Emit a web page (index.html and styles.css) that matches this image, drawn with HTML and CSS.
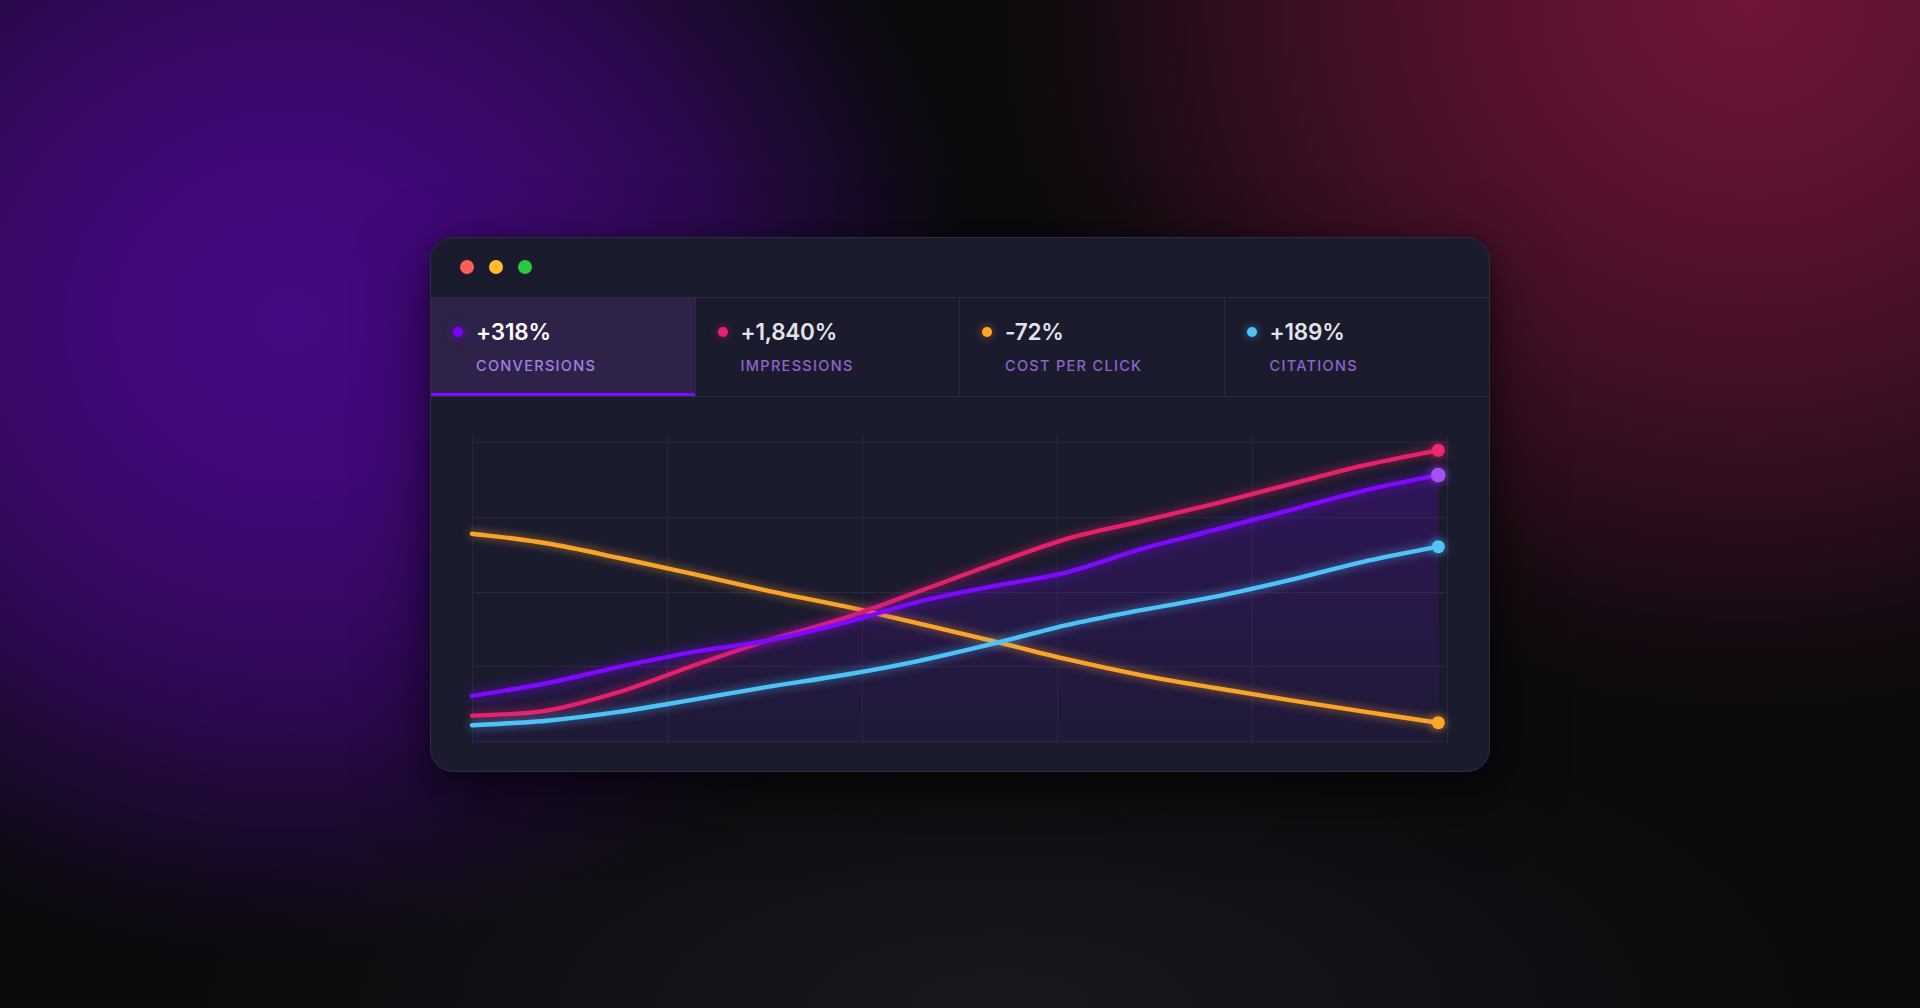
FILE: index.html
```html
<!DOCTYPE html>
<html lang="en">
<head>
<meta charset="utf-8">
<title>Metrics</title>
<link rel="stylesheet" href="styles.css">
</head>
<body>
<div class="stage">
  <div class="window">
    <div class="titlebar">
      <span class="light light-red"></span>
      <span class="light light-yellow"></span>
      <span class="light light-green"></span>
    </div>
    <div class="tabs">
      <div class="tab tab-active">
        <div class="tab-head"><span class="dot dot-purple"></span><span class="value">+318%</span></div>
        <div class="label">Conversions</div>
      </div>
      <div class="tab">
        <div class="tab-head"><span class="dot dot-pink"></span><span class="value">+1,840%</span></div>
        <div class="label">Impressions</div>
      </div>
      <div class="tab">
        <div class="tab-head"><span class="dot dot-orange"></span><span class="value">-72%</span></div>
        <div class="label">Cost per click</div>
      </div>
      <div class="tab">
        <div class="tab-head"><span class="dot dot-cyan"></span><span class="value">+189%</span></div>
        <div class="label">Citations</div>
      </div>
    </div>
    <div class="chart">
      <svg class="chart-svg" width="1000" height="320" viewBox="0 0 1000 320">
        <defs>
          <linearGradient id="fillPurple" x1="0" y1="0" x2="0" y2="1">
            <stop offset="0" stop-color="#7f00ff" stop-opacity="0.2"/>
            <stop offset="1" stop-color="#7f00ff" stop-opacity="0.04"/>
          </linearGradient>
        </defs>
        <g class="grid">
          <line x1="10.5" y1="5" x2="10.5" y2="313.5"/>
          <line x1="205.5" y1="5" x2="205.5" y2="313.5"/>
          <line x1="400.5" y1="5" x2="400.5" y2="313.5"/>
          <line x1="595.5" y1="5" x2="595.5" y2="313.5"/>
          <line x1="790.5" y1="5" x2="790.5" y2="313.5"/>
          <line x1="985.5" y1="5" x2="985.5" y2="313.5"/>
          <line x1="10" y1="11.5" x2="986" y2="11.5"/>
          <line x1="10" y1="86.5" x2="986" y2="86.5"/>
          <line x1="10" y1="161.5" x2="986" y2="161.5"/>
          <line x1="10" y1="235.5" x2="986" y2="235.5"/>
          <line x1="10" y1="310.5" x2="986" y2="310.5"/>
        </g>
        <path id="area-purple" class="area" fill="url(#fillPurple)" d=""/>
        <path id="line-orange" class="line line-orange" d=""/>
        <path id="line-pink" class="line line-pink" d=""/>
        <path id="line-purple" class="line line-purple" d=""/>
        <path id="line-cyan" class="line line-cyan" d=""/>
        <circle class="end end-orange" cx="976.3" cy="291.7" r="6.5"/>
        <circle class="end end-pink" cx="976.3" cy="19.3" r="6.5"/>
        <circle class="end end-purple" cx="976.3" cy="44" r="7.3"/>
        <circle class="end end-cyan" cx="976.3" cy="115.7" r="6.5"/>
      </svg>
    </div>
  </div>
</div>
<script src="chart.js"></script>
</body>
</html>
```

FILE: chart.js
```js
(function () {
  var traced = {
    orange: [[10,102.7],[64.7,108.3],[131.3,121.7],[205.3,136.7],[264.7,151.2],[331.3,165],[400.3,179],[464.7,194.5],[538,211.7],[595.7,226.2],[661.3,241],[731.3,253.3],[790.7,263.3],[864.7,275],[931.3,285],[976.3,291.7]],
    pink: [[10,284.7],[40,284],[64.7,282.2],[100,277.5],[131.3,270],[205.3,244.3],[264.7,222.3],[314.7,206.7],[364.7,192.7],[400.3,181.7],[464.7,157.5],[498,146],[548,126.7],[595.7,110],[648,97.2],[698,86.2],[790.7,63.3],[864.7,43.3],[931.3,27.5],[976.3,19.3]],
    purple: [[10,265],[64.7,256.7],[131.3,241.7],[205.3,225],[264.7,215.7],[314.7,208.3],[364.7,196.7],[400.3,186.7],[464.7,168.3],[518,157.2],[548,152.7],[595.7,144],[648,128.3],[698,111.7],[790.7,90],[864.7,68.3],[931.3,52.7],[976.3,44]],
    cyan: [[10,294.3],[64.7,291.7],[131.3,285],[205.3,273.3],[264.7,262.7],[331.3,251.7],[400.3,241.2],[464.7,228.3],[518,216.2],[548,208.3],[595.7,196],[664.7,181.7],[731.3,170],[790.7,158.3],[864.7,140],[931.3,123.3],[976.3,115.7]]
  };
  var X0 = 10, X1 = 976.3, N = 14;
  function sampleAt(pts, x) {
    for (var i = 0; i < pts.length - 1; i++) {
      if (x <= pts[i + 1][0]) {
        var t = (x - pts[i][0]) / (pts[i + 1][0] - pts[i][0]);
        return pts[i][1] + t * (pts[i + 1][1] - pts[i][1]);
      }
    }
    return pts[pts.length - 1][1];
  }
  function resample(pts) {
    var out = [];
    for (var k = 0; k < N; k++) {
      var x = X0 + (X1 - X0) * k / (N - 1);
      out.push([x, sampleAt(pts, x)]);
    }
    return out;
  }
  function f(n) { return n.toFixed(2); }
  function smooth(pts) {
    var d = 'M' + f(pts[0][0]) + ',' + f(pts[0][1]);
    for (var i = 0; i < pts.length - 1; i++) {
      var p0 = pts[i - 1] || pts[i];
      var p1 = pts[i];
      var p2 = pts[i + 1];
      var p3 = pts[i + 2] || p2;
      var c1x = p1[0] + (p2[0] - p0[0]) / 6;
      var c1y = p1[1] + (p2[1] - p0[1]) / 6;
      var c2x = p2[0] - (p3[0] - p1[0]) / 6;
      var c2y = p2[1] - (p3[1] - p1[1]) / 6;
      d += ' C' + f(c1x) + ',' + f(c1y) + ' ' + f(c2x) + ',' + f(c2y) + ' ' + f(p2[0]) + ',' + f(p2[1]);
    }
    return d;
  }
  var data = {};
  Object.keys(traced).forEach(function (k) {
    data[k] = resample(traced[k]);
    var el = document.getElementById('line-' + k);
    if (el) el.setAttribute('d', smooth(data[k]));
  });
  var p = data.purple;
  var area = smooth(p) + ' L' + f(p[p.length - 1][0]) + ',310.5 L' + f(p[0][0]) + ',310.5 Z';
  document.getElementById('area-purple').setAttribute('d', area);
})();
```

FILE: styles.css
```css
* { box-sizing: border-box; }

html, body {
  margin: 0;
  height: 100%;
}

body {
  font-family: "Inter", "Liberation Sans", sans-serif;
  background:
    radial-gradient(ellipse 690px 640px at 290px 320px,
      rgba(68, 8, 128, 1) 0%,
      rgba(68, 8, 128, 0.93) 25%,
      rgba(68, 8, 128, 0.75) 47%,
      rgba(68, 8, 128, 0.55) 64%,
      rgba(68, 8, 128, 0.34) 76%,
      rgba(68, 8, 128, 0.12) 90%,
      rgba(68, 8, 128, 0) 100%),
    radial-gradient(ellipse 760px 720px at 1750px 0px,
      rgba(112, 20, 58, 1) 0%,
      rgba(112, 20, 58, 0.82) 25%,
      rgba(112, 20, 58, 0.53) 55%,
      rgba(112, 20, 58, 0.31) 72%,
      rgba(112, 20, 58, 0.1) 88%,
      rgba(112, 20, 58, 0) 100%),
    radial-gradient(ellipse 800px 320px at 1000px 1008px,
      rgba(32, 30, 36, 0.7) 0%,
      rgba(32, 30, 36, 0) 100%),
    #0b0a0d;
  overflow: hidden;
}

.stage {
  height: 100%;
  display: flex;
  align-items: center;
  justify-content: center;
}

.window {
  width: 1060px;
  height: 535px;
  background: #1b1b2e;
  border: 1px solid #2c2d41;
  border-radius: 23px;
  box-shadow: 0 24px 70px rgba(0, 0, 0, 0.55), 0 4px 20px rgba(0, 0, 0, 0.35);
  display: flex;
  flex-direction: column;
  overflow: hidden;
}

.titlebar {
  height: 60px;
  flex: none;
  display: flex;
  align-items: center;
  gap: 15px;
  padding-left: 29px;
  padding-bottom: 1px;
  border-bottom: 1px solid #2a2b3e;
}

.light {
  width: 14px;
  height: 14px;
  border-radius: 50%;
}
.light-red { background: #ff5f57; }
.light-yellow { background: #febc2e; }
.light-green { background: #28c840; }

.tabs {
  flex: none;
  height: 99px;
  display: grid;
  grid-template-columns: repeat(4, 1fr);
  border-bottom: 1px solid #2a2b3e;
}

.tab {
  position: relative;
  padding: 20px 0 0 22px;
  border-right: 1px solid #2a2b3e;
}
.tab:last-child { border-right: none; }

.tab-active {
  background: #2f2249;
}
.tab-active::after {
  content: "";
  position: absolute;
  left: 0;
  right: 0;
  bottom: 0;
  height: 3px;
  background: #7a0cff;
}

.tab-head {
  display: flex;
  align-items: center;
  gap: 13px;
  height: 28px;
}

.dot {
  width: 10px;
  height: 10px;
  border-radius: 50%;
  flex: none;
}
.dot-purple { background: #7a00ff; box-shadow: 0 0 8px rgba(122, 0, 255, 0.6); }
.dot-pink { background: #ee1f6b; box-shadow: 0 0 8px rgba(238, 31, 107, 0.55); }
.dot-orange { background: #ffa726; box-shadow: 0 0 8px rgba(255, 167, 38, 0.5); }
.dot-cyan { background: #4fc3f7; box-shadow: 0 0 8px rgba(79, 195, 247, 0.55); }

.value {
  font-size: 22.5px;
  line-height: 28px;
  font-weight: 600;
  color: #e3e3ea;
  letter-spacing: -0.2px;
}
.tab-active .value { color: #ffffff; }

.label {
  margin-top: 10px;
  margin-left: 23px;
  font-size: 14.5px;
  line-height: 20px;
  font-weight: 500;
  letter-spacing: 1.3px;
  text-transform: uppercase;
  color: #8c63cb;
}
.tab-active .label { color: #a37ee1; }

.chart {
  flex: 1;
  padding: 34px 0 0 31px;
}

.chart-svg {
  display: block;
  overflow: visible;
}

.grid line {
  stroke: #27283b;
  stroke-width: 1;
}

.line {
  fill: none;
  stroke-width: 4.4;
  stroke-linecap: round;
  stroke-linejoin: round;
}
.line-orange { stroke: #faa52a; filter: drop-shadow(0 0 5px rgba(250, 165, 42, 0.65)); }
.line-pink { stroke: #e6206a; filter: drop-shadow(0 0 5px rgba(230, 32, 106, 0.7)); }
.line-purple { stroke: #7f08ff; filter: drop-shadow(0 0 6px rgba(127, 8, 255, 0.75)); }
.line-cyan { stroke: #4fc3f7; filter: drop-shadow(0 0 5px rgba(79, 195, 247, 0.65)); }

.end-orange { fill: #fca82b; filter: drop-shadow(0 0 5px rgba(252, 168, 43, 0.7)); }
.end-pink { fill: #ec2a6c; filter: drop-shadow(0 0 5px rgba(236, 42, 108, 0.7)); }
.end-purple { fill: #a651f7; filter: drop-shadow(0 0 5px rgba(166, 81, 247, 0.7)); }
.end-cyan { fill: #52c5f7; filter: drop-shadow(0 0 5px rgba(82, 197, 247, 0.7)); }
```
